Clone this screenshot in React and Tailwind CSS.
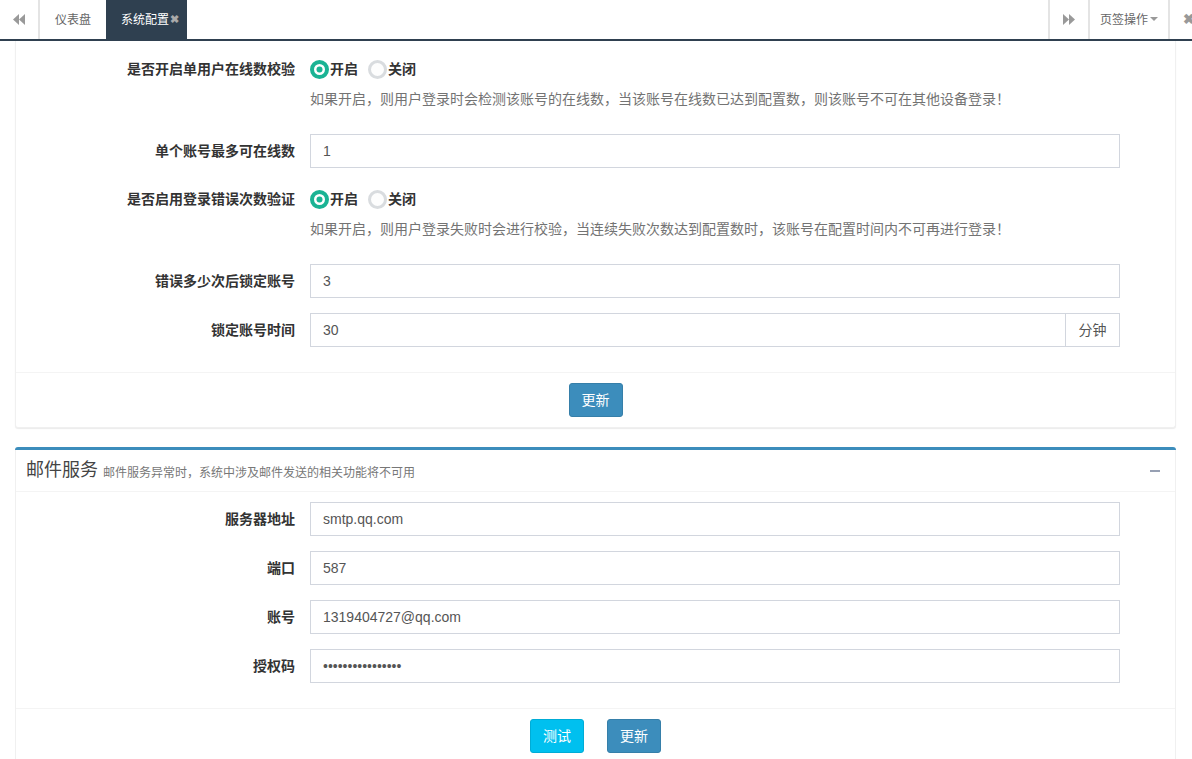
import React from "react";

const FONT = { fontFamily: '"Liberation Sans", "Noto Sans CJK SC", sans-serif' };

function Radio({ checked, label }) {
  return (
    <label className="flex items-center mr-[10px]">
      {checked ? (
        <svg width="19" height="19" viewBox="0 0 19 19">
          <circle cx="9.5" cy="9.5" r="7.5" fill="#fff" stroke="#1ab394" strokeWidth="4" />
          <circle cx="9.5" cy="9.5" r="3" fill="#1ab394" />
        </svg>
      ) : (
        <svg width="19" height="19" viewBox="0 0 19 19">
          <circle cx="9.5" cy="9.5" r="8" fill="#fdfdfd" stroke="#d9dcdf" strokeWidth="3" />
        </svg>
      )}
      <span className="ml-[1px] text-[14px] font-bold text-[#333]">{label}</span>
    </label>
  );
}

function Row({ label, children, className = "" }) {
  return (
    <div className={"flex items-center h-[34px] " + className}>
      <div className="w-[279px] text-right text-[14px] font-bold text-[#333]">{label}</div>
      <div className="ml-[15px] w-[810px] h-full flex items-center">{children}</div>
    </div>
  );
}

function Input({ value }) {
  return (
    <div className="w-full h-[34px] border border-[#d2d6de] px-[12px] flex items-center text-[14px] text-[#555]">
      {value}
    </div>
  );
}

function Help({ children }) {
  return (
    <div className="mt-[4px] h-[18px] leading-[18px] pl-[294px] text-[14px] text-[#737373]">{children}</div>
  );
}

function BackIcon() {
  return (
    <svg width="12" height="11" viewBox="0 0 12 11">
      <polygon points="6,0 6,11 0,5.5" fill="#999" />
      <polygon points="12,0 12,11 6,5.5" fill="#999" />
    </svg>
  );
}

function FwdIcon() {
  return (
    <svg width="12" height="11" viewBox="0 0 12 11">
      <polygon points="0,0 0,11 6,5.5" fill="#999" />
      <polygon points="6,0 6,11 12,5.5" fill="#999" />
    </svg>
  );
}

export default function App() {
  return (
    <div className="w-[1192px] h-[759px] overflow-hidden bg-white" style={FONT}>
      {/* Tab bar */}
      <div className="flex h-[41px] border-b-2 border-[#2f4050] bg-white">
        <div className="w-[40px] h-full border-r-2 border-[#e4e4e4] flex items-center justify-center">
          <BackIcon />
        </div>
        <div className="w-[66px] h-full flex items-center justify-center text-[12px] text-[#666]">仪表盘</div>
        <div className="w-[81px] h-full bg-[#2f4050] flex items-center pl-[15px] text-[12px] text-white">
          系统配置
          <span className="ml-[1px] text-[#aaa] text-[11px] font-bold">✖</span>
        </div>
        <div className="flex-1" />
        <div className="w-[40px] h-full border-l-2 border-[#e4e4e4] flex items-center justify-center">
          <FwdIcon />
        </div>
        <div className="w-[80px] h-full border-l-2 border-[#e4e4e4] flex items-center justify-center text-[12px] text-[#666]">
          页签操作
          <svg className="ml-[2px]" width="8" height="5" viewBox="0 0 8 5">
            <polygon points="0,0 8,0 4,4" fill="#999" />
          </svg>
        </div>
        <div className="w-[24px] h-full border-l-2 border-[#e4e4e4] flex items-center pl-[13px] overflow-hidden">
          <span className="text-[14px] font-bold text-[#999]">✖</span>
        </div>
      </div>

      {/* Content */}
      <div className="pl-[15px] pr-[15px] flex">
        <div className="flex-1">
          {/* Box 1 */}
          <div className="border-x border-b border-[#f0f0f0] rounded-b-[3px] shadow-[0_1px_1px_rgba(0,0,0,0.08)] bg-white">
            <div className="pt-[11px]">
              <Row label="是否开启单用户在线数校验">
                <Radio checked label="开启" />
                <Radio label="关闭" />
              </Row>
              <Help>如果开启，则用户登录时会检测该账号的在线数，当该账号在线数已达到配置数，则该账号不可在其他设备登录！</Help>
              <Row label="单个账号最多可在线数" className="mt-[26px]">
                <Input value="1" />
              </Row>
              <Row label="是否启用登录错误次数验证" className="mt-[14px]">
                <Radio checked label="开启" />
                <Radio label="关闭" />
              </Row>
              <Help>如果开启，则用户登录失败时会进行校验，当连续失败次数达到配置数时，该账号在配置时间内不可再进行登录！</Help>
              <Row label="错误多少次后锁定账号" className="mt-[26px]">
                <Input value="3" />
              </Row>
              <Row label="锁定账号时间" className="mt-[15px]">
                <div className="flex w-full h-[34px]">
                  <div className="flex-1 border border-[#d2d6de] px-[12px] flex items-center text-[14px] text-[#555]">30</div>
                  <div className="w-[54px] border border-l-0 border-[#d2d6de] flex items-center justify-center text-[14px] text-[#555]">分钟</div>
                </div>
              </Row>
            </div>
            <div className="mt-[25px] border-t border-[#f4f4f4] pt-[10px] pb-[10px] flex justify-center">
              <button className="w-[54px] h-[34px] rounded-[3px] bg-[#3c8dbc] border border-[#367fa9] text-white text-[14px]">更新</button>
            </div>
          </div>

          {/* Box 2 */}
          <div className="mt-[19px] border-t-[3px] border-[#3c8dbc] rounded-t-[3px] bg-white">
            <div className="border-x border-[#f0f0f0]">
              <div className="h-[42px] border-b border-[#f4f4f4] flex items-center pl-[10px] pr-[15px]">
                <span className="text-[18px] text-[#444]">邮件服务</span>
                <span className="ml-[5px] mt-[4px] text-[12px] text-[#777]">邮件服务异常时，系统中涉及邮件发送的相关功能将不可用</span>
                <div className="flex-1" />
                <div className="w-[10px] h-[2px] bg-[#97a0b3]" />
              </div>
              <div className="pt-[10px]">
                <Row label="服务器地址"><Input value="smtp.qq.com" /></Row>
                <Row label="端口" className="mt-[15px]"><Input value="587" /></Row>
                <Row label="账号" className="mt-[15px]"><Input value="1319404727@qq.com" /></Row>
                <Row label="授权码" className="mt-[15px]">
                  <Input value={<span className="text-[14px]">••••••••••••••••</span>} />
                </Row>
              </div>
              <div className="mt-[25px] border-t border-[#f4f4f4] pt-[10px] pb-[10px] flex justify-center gap-[23px]">
                <button className="w-[54px] h-[34px] rounded-[3px] bg-[#00c0ef] border border-[#00acd6] text-white text-[14px]">测试</button>
                <button className="w-[54px] h-[34px] rounded-[3px] bg-[#3c8dbc] border border-[#367fa9] text-white text-[14px]">更新</button>
              </div>
            </div>
          </div>
        </div>
        <div className="w-[1px]" />
      </div>
    </div>
  );
}
